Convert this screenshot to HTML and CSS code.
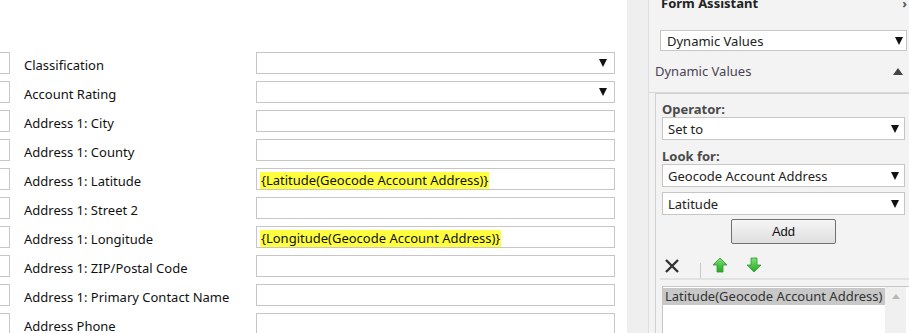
FILE: index.html
```html
<!DOCTYPE html>
<html>
<head>
<meta charset="utf-8">
<link rel="stylesheet" href="styles.css">
</head>
<body>
<div class="form">
  <div class="row"><span class="box"></span><span class="label">Classification</span><span class="input select"><span class="arrow"></span></span></div>
  <div class="row"><span class="box"></span><span class="label">Account Rating</span><span class="input select"><span class="arrow"></span></span></div>
  <div class="row"><span class="box"></span><span class="label">Address 1: City</span><span class="input"></span></div>
  <div class="row"><span class="box"></span><span class="label">Address 1: County</span><span class="input"></span></div>
  <div class="row"><span class="box"></span><span class="label">Address 1: Latitude</span><span class="input"><span class="hl">{Latitude(Geocode Account Address)}</span></span></div>
  <div class="row"><span class="box"></span><span class="label">Address 1: Street 2</span><span class="input"></span></div>
  <div class="row"><span class="box"></span><span class="label">Address 1: Longitude</span><span class="input"><span class="hl">{Longitude(Geocode Account Address)}</span></span></div>
  <div class="row"><span class="box"></span><span class="label">Address 1: ZIP/Postal Code</span><span class="input"></span></div>
  <div class="row"><span class="box"></span><span class="label">Address 1: Primary Contact Name</span><span class="input"></span></div>
  <div class="row"><span class="box"></span><span class="label">Address Phone</span><span class="input"></span></div>
</div>
<div class="strip"></div>
<div class="panel">
  <div class="title"><span>Form Assistant</span><span class="chev">›</span></div>
  <div class="psel"><span>Dynamic Values</span><span class="arrow"></span></div>
  <div class="sechead"><span>Dynamic Values</span><span class="up"></span></div>
  <div class="inner">
    <div class="flabel">Operator:</div>
    <div class="isel"><span>Set to</span><span class="arrow"></span></div>
    <div class="flabel look">Look for:</div>
    <div class="isel"><span>Geocode Account Address</span><span class="arrow"></span></div>
    <div class="isel second"><span>Latitude</span><span class="arrow"></span></div>
    <div class="btnrow"><button class="add">Add</button></div>
    <div class="tools">
      <svg class="x" width="16" height="16" viewBox="0 0 16 16"><path d="M2 2 L14 14 M14 2 L2 14" stroke="#333" stroke-width="2.4" fill="none"/></svg>
      <span class="sep"></span>
      <svg class="arr" width="16" height="17" viewBox="0 0 16 17"><defs><linearGradient id="gu" x1="0" y1="0" x2="0" y2="1"><stop offset="0" stop-color="#7fe07a"/><stop offset="1" stop-color="#22a91f"/></linearGradient></defs><path d="M8 1 L15 8 L11 8 L11 15 L5 15 L5 8 L1 8 Z" fill="url(#gu)" stroke="#2e9a2a" stroke-width="0.8"/></svg>
      <svg class="arr" width="16" height="17" viewBox="0 0 16 17"><defs><linearGradient id="gd" x1="0" y1="0" x2="0" y2="1"><stop offset="0" stop-color="#7fe07a"/><stop offset="1" stop-color="#22a91f"/></linearGradient></defs><path d="M5 1 L11 1 L11 8 L15 8 L8 15 L1 8 L5 8 Z" fill="url(#gd)" stroke="#2e9a2a" stroke-width="0.8"/></svg>
    </div>
    <div class="list">
      <div class="items"><div class="item">Latitude(Geocode Account Address)</div></div>
      <div class="scroll"><span class="sup"></span></div>
    </div>
  </div>
</div>
</body>
</html>
```
FILE: styles.css
```css
html, body {
  margin: 0;
  padding: 0;
  width: 909px;
  height: 333px;
  overflow: hidden;
  background: #fff;
  font-family: "Segoe UI", "Noto Sans", "Open Sans", sans-serif;
}
body {
  display: flex;
}
.form {
  width: 627px;
  flex: none;
  padding-top: 52px;
  display: flex;
  flex-direction: column;
  gap: 7px;
}
.row {
  display: flex;
  align-items: center;
  height: 22px;
}
.box {
  width: 14px;
  height: 20px;
  margin-left: -6px;
  border: 1px solid #c6c6c6;
  flex: none;
}
.label {
  width: 232px;
  margin-left: 14px;
  font-size: 13px;
  color: #111;
  white-space: nowrap;
  flex: none;
  position: relative;
  top: 2px;
}
.input {
  width: 357px;
  height: 20px;
  border: 1px solid #c6c6c6;
  flex: none;
  position: relative;
  display: flex;
  align-items: flex-end;
}
.arrow {
  display: inline-block;
  width: 0;
  height: 0;
  border-left: 4px solid transparent;
  border-right: 4px solid transparent;
  border-top: 8px solid #111;
}
.input .arrow {
  position: absolute;
  right: 7px;
  top: 6px;
}
.hl {
  background: #ffff40;
  font-size: 13px;
  color: #111;
  margin-left: 3px;
  padding: 0 1px;
  line-height: 17px;
}
.strip {
  width: 21px;
  flex: none;
  background: #efefef;
}
.panel {
  flex: 1;
  background: #f3f3f3;
  border-left: 1px solid #dedede;
  position: relative;
}
.title {
  display: flex;
  justify-content: space-between;
  padding: 0 2px 0 12px;
  margin-top: -6px;
  height: 36px;
  font-size: 13px;
  font-weight: bold;
  color: #222;
}
.chev {
  font-weight: bold;
  color: #555;
}
.psel {
  margin-left: 11px;
  background: #fff;
  border: 1px solid #c6c6c6;
  display: flex;
  justify-content: space-between;
  align-items: center;
  padding: 0 3px 0 6px;
  box-sizing: border-box;
  width: 247px;
  height: 21px;
  font-size: 13px;
  color: #222;
}
.sechead {
  height: 42px;
  border-bottom: 1px solid #d8d8d8;
  display: flex;
  justify-content: space-between;
  padding: 11px 6px 0 6px;
  box-sizing: border-box;
  font-size: 13px;
  color: #4a4353;
}
.up {
  display: inline-block;
  width: 0;
  height: 0;
  border-left: 5px solid transparent;
  border-right: 5px solid transparent;
  border-bottom: 7px solid #444;
  margin-top: 6px;
}
.inner {
  margin-left: 6px;
  border-left: 1px solid #d0d0d0;
  border-top: 1px solid #d0d0d0;
  padding: 7px 0 0 6px;
  height: 260px;
  box-sizing: border-box;
  background: #f3f3f3;
}
.flabel {
  font-size: 13px;
  font-weight: bold;
  color: #4a4a4a;
  height: 16px;
  line-height: 16px;
}
.look {
  margin-top: 8px;
}
.isel {
  width: 243px;
  height: 23px;
  box-sizing: border-box;
  border: 1px solid #c6c6c6;
  background: #fff;
  display: flex;
  justify-content: space-between;
  align-items: center;
  padding: 0 5px 0 5px;
  font-size: 13px;
  color: #222;
}
.second {
  margin-top: 5px;
}
.btnrow {
  margin-top: 4px;
  padding-left: 69px;
  height: 25px;
}
.add {
  width: 105px;
  height: 25px;
  border: 1px solid #707070;
  border-radius: 2px;
  background: linear-gradient(#f6f6f6, #dedede);
  font-family: "Liberation Sans", Arial, sans-serif;
  font-size: 13px;
  color: #111;
  padding: 0;
}
.tools {
  margin-top: 13px;
  height: 21px;
  display: flex;
  align-items: flex-start;
  padding-left: 4px;
  border-bottom: 2px solid #e2e2e2;
  margin-left: -2px;
}
.tools .x {
  margin-top: 1px;
}
.sep {
  width: 1px;
  height: 15px;
  background: #c8c8c8;
  margin: 6px 11px 0 20px;
}
.arr + .arr {
  margin-left: 18px;
}
.list {
  margin-top: 6px;
  height: 60px;
  display: flex;
  border: 1px solid #c6c6c6;
  border-right: none;
  background: #fff;
}
.items {
  width: 222px;
  padding-top: 1px;
}
.item {
  background: #c8c8c8;
  font-size: 13px;
  color: #333;
  height: 17px;
  line-height: 17px;
  padding-left: 2px;
  white-space: nowrap;
}
.scroll {
  width: 21px;
  background: #f0f0f0;
  display: flex;
  justify-content: center;
  padding-top: 7px;
  box-sizing: border-box;
}
.sup {
  width: 0;
  height: 0;
  border-left: 4px solid transparent;
  border-right: 4px solid transparent;
  border-bottom: 5px solid #b8b8b8;
}
```
